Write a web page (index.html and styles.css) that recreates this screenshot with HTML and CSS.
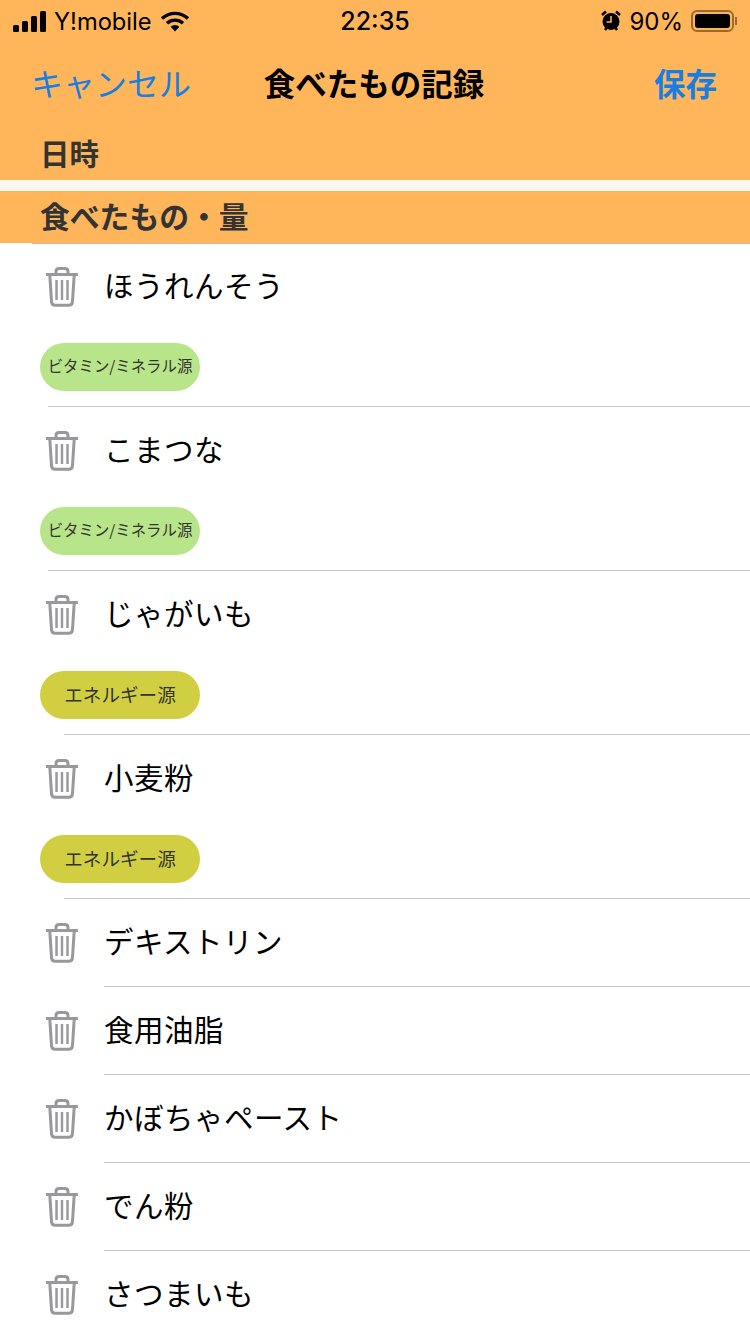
FILE: index.html
```html
<!DOCTYPE html>
<html lang="ja">
  <head>
    <meta charset="UTF-8" />
    <title>食べたもの記録</title>
    <link rel="stylesheet" href="styles.css">
  </head>
  <body>
    <svg class="defs" width="0" height="0">
      <symbol id="trash" viewBox="0 0 34 40">
        <path d="M1 7.500h32M11 7V4.500C11 2.600 12.400 1.500 14 1.500h6c1.600 0 3 1.100 3 3V7M4.800 8l1.700 26.500c.1 2.400 1.500 3.800 3.800 3.800h13.400c2.300 0 3.700-1.400 3.800-3.800L29.200 8" fill="none" stroke="#98989d" stroke-width="3"/>
        <path d="M11.500 13v20M17 13v20M22.500 13v20" fill="none" stroke="#98989d" stroke-width="2.400"/>
      </symbol>
    </svg>

    <header class="top">
      <div class="status">
        <div class="status_left">
          <svg class="signal" width="34" height="21" viewBox="0 0 34 21">
            <rect x="0" y="14" width="6" height="7" rx="1.500"/>
            <rect x="9" y="10" width="6" height="11" rx="1.500"/>
            <rect x="18" y="5" width="6" height="16" rx="1.500"/>
            <rect x="27" y="0" width="6" height="21" rx="1.500"/>
          </svg>
          <span class="carrier">Y!mobile</span>
          <svg class="wifi" width="30" height="22" viewBox="0 0 30 22">
            <path d="M15 21.500l-4.400-4.800a6.500 6.500 0 0 1 8.800 0z"/>
            <path d="M2 8.500a19 19 0 0 1 26 0" fill="none" stroke="#000" stroke-width="3.400"/>
            <path d="M7 13.200a12 12 0 0 1 16 0" fill="none" stroke="#000" stroke-width="3.400"/>
          </svg>
        </div>
        <span class="clock">22:35</span>
        <div class="status_right">
          <svg class="alarm" width="20" height="22" viewBox="0 0 20 22">
            <circle cx="10" cy="11.500" r="8.500"/>
            <path d="M1 5l4-3.500M19 5l-4-3.500M4 20l1.500-2M16 20l-1.500-2" stroke="#000" stroke-width="2.500"/>
            <path d="M10 6v6H5.500" fill="none" stroke="#ffb55a" stroke-width="1.600"/>
          </svg>
          <span class="percent">90%</span>
          <div class="battery"><div class="battery_fill"></div></div>
          <div class="battery_tip"></div>
        </div>
      </div>
      <nav class="nav">
        <span class="nav_cancel">キャンセル</span>
        <h1 class="nav_title">食べたもの記録</h1>
        <span class="nav_save">保存</span>
      </nav>
      <h2 class="date_head">日時</h2>
    </header>

    <div class="band"></div>

    <h2 class="food_head">食べたもの・量</h2>

    <ul class="list">
      <li class="item item_tag sep48">
        <div class="item_row"><svg class="trash"><use href="#trash"/></svg><span class="name">ほうれんそう</span></div>
        <span class="tag tag_green">ビタミン/ミネラル源</span>
      </li>
      <li class="item item_tag sep48">
        <div class="item_row"><svg class="trash"><use href="#trash"/></svg><span class="name">こまつな</span></div>
        <span class="tag tag_green">ビタミン/ミネラル源</span>
      </li>
      <li class="item item_tag sep64">
        <div class="item_row"><svg class="trash"><use href="#trash"/></svg><span class="name">じゃがいも</span></div>
        <span class="tag tag_yellow">エネルギー源</span>
      </li>
      <li class="item item_tag sep64">
        <div class="item_row"><svg class="trash"><use href="#trash"/></svg><span class="name name_kanji">小麦粉</span></div>
        <span class="tag tag_yellow">エネルギー源</span>
      </li>
      <li class="item sep104">
        <div class="item_row"><svg class="trash"><use href="#trash"/></svg><span class="name">デキストリン</span></div>
      </li>
      <li class="item sep104">
        <div class="item_row"><svg class="trash"><use href="#trash"/></svg><span class="name name_kanji">食用油脂</span></div>
      </li>
      <li class="item sep104">
        <div class="item_row"><svg class="trash"><use href="#trash"/></svg><span class="name">かぼちゃペースト</span></div>
      </li>
      <li class="item sep104">
        <div class="item_row"><svg class="trash"><use href="#trash"/></svg><span class="name">でん粉</span></div>
      </li>
      <li class="item">
        <div class="item_row"><svg class="trash"><use href="#trash"/></svg><span class="name">さつまいも</span></div>
      </li>
    </ul>
  </body>
</html>
```

FILE: styles.css
```css
* {
  box-sizing: border-box;
  margin: 0;
  padding: 0;
  list-style: none;
}
body {
  width: 750px;
  height: 1334px;
  overflow: hidden;
  background-color: #fff;
  color: #000;
  font-family: "Liberation Sans", "Noto Sans CJK JP", sans-serif;
}
.defs {
  position: absolute;
}

/* top */
.top {
  height: 180px;
  background-color: #ffb55a;
}
.status {
  display: flex;
  justify-content: space-between;
  align-items: center;
  height: 42px;
  padding: 0 13px;
}
.status_left,
.status_right {
  display: flex;
  align-items: center;
  width: 240px;
}
.status_right {
  justify-content: flex-end;
}
.signal {
  margin-right: 7px;
}
.carrier {
  font-family: "Inter", sans-serif;
  font-size: 23.700px;
  margin-right: 8px;
}
.clock {
  font-family: "Inter", sans-serif;
  font-size: 25px;
  font-weight: 500;
}
.alarm {
  margin-right: 8px;
}
.percent {
  font-family: "Inter", sans-serif;
  font-size: 24px;
  margin-right: 8px;
}
.battery {
  width: 43px;
  height: 22px;
  padding: 2px;
  border: 2px solid #9c6a2e;
  border-radius: 6px;
}
.battery_fill {
  width: 100%;
  height: 100%;
  background-color: #000;
  border-radius: 3px;
}
.battery_tip {
  width: 2px;
  height: 8px;
  margin-left: 1px;
  background-color: #9c6a2e;
}
.nav {
  display: flex;
  justify-content: space-between;
  align-items: center;
  height: 84px;
  padding: 0 33px 4px 33px;
  font-family: "Noto Sans CJK JP", sans-serif;
}
.nav_cancel {
  width: 200px;
  margin-left: -2px;
  font-size: 32px;
  font-weight: 400;
  color: #1a7ee0;
}
.nav_title {
  font-size: 31.500px;
  font-weight: 700;
}
.nav_save {
  width: 200px;
  text-align: right;
  font-size: 31.500px;
  font-weight: 700;
  color: #1a7ee0;
}
.date_head {
  height: 54px;
  padding-left: 40px;
  font-family: "Noto Sans CJK JP", sans-serif;
  font-size: 29.500px;
  line-height: 52px;
  font-weight: 700;
  color: #333;
}
.band {
  height: 11px;
  background-color: #fbf6f0;
}
.food_head {
  position: relative;
  height: 52px;
  padding-left: 40px;
  background-color: #ffb55a;
  font-family: "Noto Sans CJK JP", sans-serif;
  font-size: 29.800px;
  line-height: 49px;
  font-weight: 700;
  color: #333;
}
/* the line under the heading leaves the left 32px empty */
.food_head::after {
  content: "";
  position: absolute;
  left: 32px;
  right: 0;
  bottom: -1px;
  height: 1px;
  background-color: #d9b98c;
}

/* list */
.list {
  font-family: "Noto Sans CJK JP", sans-serif;
}
.item {
  position: relative;
  height: 88px;
}
.item_tag {
  height: 164px;
}
.item::after {
  content: "";
  position: absolute;
  right: 0;
  bottom: 0;
  height: 1px;
  background-color: #c6c6c8;
}
.sep48::after {
  left: 48px;
}
.sep64::after {
  left: 64px;
}
.sep104::after {
  left: 104px;
}
.item_row {
  display: flex;
  align-items: center;
  height: 87px;
  padding-left: 45px;
}
.trash {
  flex: none;
  width: 34px;
  height: 40px;
  margin-right: 26px;
}
.name {
  margin-bottom: 6px;
  margin-left: -1px;
  font-size: 29.500px;
  font-weight: 400;
  letter-spacing: 0.500px;
}
.name_kanji {
  margin-left: -1px;
}
.tag {
  display: flex;
  justify-content: center;
  align-items: center;
  width: 160px;
  height: 48px;
  margin: 13px 0 0 40px;
  padding-bottom: 4px;
  border-radius: 24px;
  color: #333;
}
.tag_green {
  background-color: #b9e58a;
  font-size: 15.400px;
}
.tag_yellow {
  background-color: #d1cf41;
  font-size: 18.600px;
}
```
